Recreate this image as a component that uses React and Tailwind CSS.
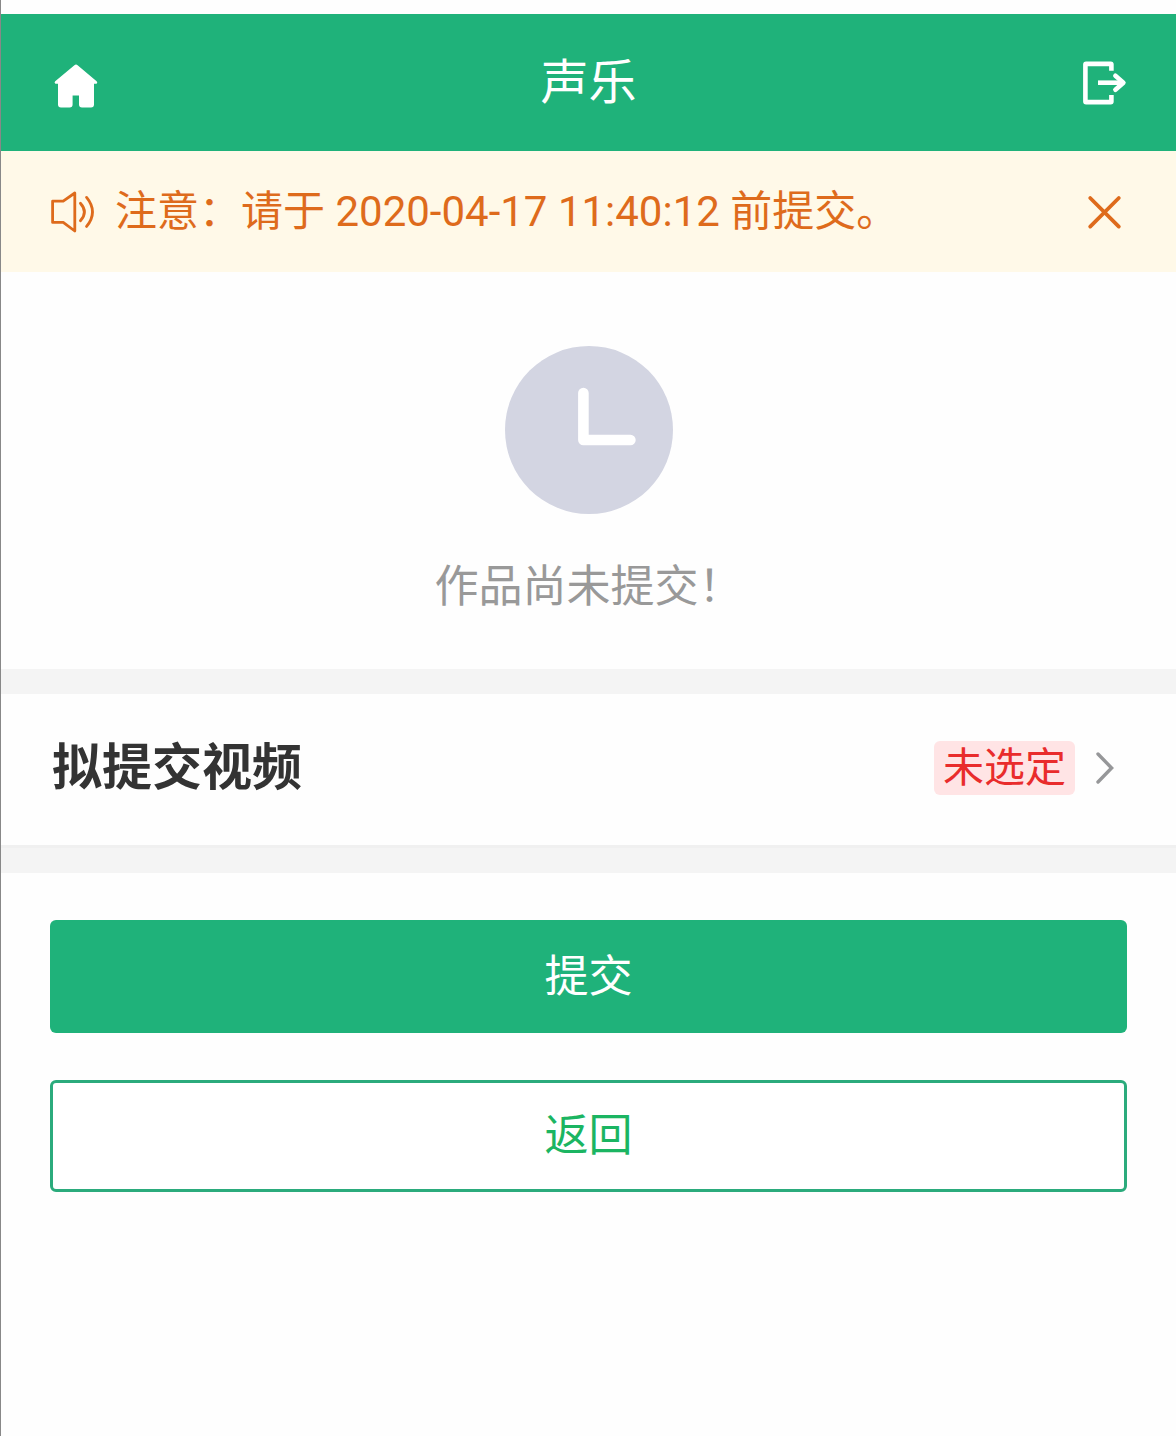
import React, { useState } from "react";

const HomeIcon = () => (
  <svg viewBox="0 0 50 50" className="size-[50px]" fill="currentColor" aria-hidden="true">
    <path d="M24.4 7.2Q26 6 27.6 7.2L46.6 23.2Q48 24.6 46.6 25.8H44V46.6Q44 49.6 41 49.6H32Q29 49.6 29 46.6V37.6H22.6V46.6Q22.6 49.6 19.6 49.6H11Q8 49.6 8 46.6V25.8H5.4Q3.8 24.6 5.2 23.2Z" />
  </svg>
);

const LogoutIcon = () => (
  <svg viewBox="0 0 50 50" className="size-[50px]" fill="none" stroke="currentColor" strokeWidth="4.6" strokeLinejoin="round" aria-hidden="true">
    <path d="M34.4 12.8V6.6Q34.4 5.9 33.7 5.9H9.1Q8.4 5.9 8.4 6.6V43.4Q8.4 44.1 9.1 44.1H33.7Q34.4 44.1 34.4 43.4V37" />
    <path d="M21 24.7H46" />
    <path d="M38.4 17.8L46.4 24.7L38.4 31.8" strokeLinecap="round" />
  </svg>
);

const SpeakerIcon = () => (
  <svg viewBox="0 0 46 50" className="w-[46px] h-[50px]" fill="none" stroke="currentColor" strokeWidth="2.8" strokeLinecap="round" strokeLinejoin="round" aria-hidden="true">
    <path d="M2.6 14.2H13.2L24.8 6V44L13.2 35.4H2.6Z" />
    <path d="M30.4 16.2Q38.4 25 30.4 33.8" />
    <path d="M36.6 10.4Q48.4 25 36.6 39.4" />
  </svg>
);

const CloseIcon = () => (
  <svg viewBox="0 0 44 44" className="size-11" fill="none" stroke="currentColor" strokeWidth="3.8" strokeLinecap="round" aria-hidden="true">
    <path d="M7.2 8L35.8 36.6M35.8 8L7.2 36.6" />
  </svg>
);

const ClockIcon = () => (
  <svg viewBox="0 0 168 168" className="size-[168px]" aria-hidden="true">
    <circle cx="84" cy="84" r="84" fill="#d3d5e2" />
    <path d="M78.4 47V94H125.4" fill="none" stroke="#fff" strokeWidth="10.6" strokeLinecap="round" strokeLinejoin="round" />
  </svg>
);

const ArrowIcon = () => (
  <svg viewBox="0 0 20 36" className="w-5 h-9" fill="none" stroke="currentColor" strokeWidth="3.4" strokeLinecap="round" aria-hidden="true">
    <path d="M3 4L16.6 18L3 32" />
  </svg>
);

const App = () => {
  const [showNotice, setShowNotice] = useState(true);

  return (
    <div className="min-h-screen border-l border-[#888888] bg-[#fefefe] pt-3.5 font-[Roboto,'Noto_Sans_CJK_SC',sans-serif]" lang="zh-CN">
      <header className="flex items-center justify-between bg-[#1fb27a] px-[49px] h-[137px] text-white">
        <a href="#home" aria-label="首页">
          <HomeIcon />
        </a>
        <h1 className="text-[48px] leading-[60px]">声乐</h1>
        <button type="button" aria-label="退出">
          <LogoutIcon />
        </button>
      </header>

      {showNotice && (
        <div className="flex items-center bg-[#fff9e8] px-[49px] h-[121px] text-[#de6b1c]">
          <SpeakerIcon />
          <p className="ml-[19px] flex-1 text-[42px] leading-[60px]">
            注意：请于 2020-04-17 11:40:12 前提交。
          </p>
          <button type="button" aria-label="关闭" onClick={() => setShowNotice(false)}>
            <CloseIcon />
          </button>
        </div>
      )}

      <section className="flex flex-col items-center pt-[74px] pb-[52px]">
        <ClockIcon />
        <p className="mt-[43px] text-[44px] leading-[60px] text-[#999999]">作品尚未提交！</p>
      </section>

      <div className="border-y-[25px] border-[#f4f4f4]">
        <a href="#video" className="flex items-center h-[154px] pl-[51px] pr-[61px] border-b-3 border-[#f0f0f0] pb-[3px]">
          <h2 className="flex-1 text-[50px] leading-[60px] font-bold text-[#333333]">拟提交视频</h2>
          <span className="rounded-md bg-[#ffe4e5] px-[9px] text-[41px] leading-[54px] text-[#e92c2c]">
            未选定
          </span>
          <span className="ml-5 text-[#969799]">
            <ArrowIcon />
          </span>
        </a>
      </div>

      <div className="flex flex-col gap-[47px] px-[49px] pt-[47px] text-[44px] leading-[60px]">
        <button type="button" className="h-[113px] rounded-md bg-[#1fb27a] text-white">
          提交
        </button>
        <button type="button" className="h-[112px] rounded-md border-3 border-[#2bab7c] bg-white text-[#1bb562]">
          返回
        </button>
      </div>
    </div>
  );
};

export default App;
